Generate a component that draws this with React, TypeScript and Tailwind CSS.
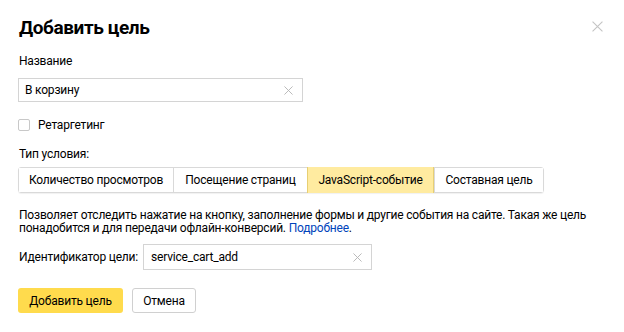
import { useState } from "react";

function Cross({ size = 9, className = "" }: { size?: number; className?: string }) {
  return (
    <svg width={size} height={size} viewBox="0 0 10 10" className={className}>
      <path d="M0.5 0.5 L9.5 9.5 M9.5 0.5 L0.5 9.5" stroke="currentColor" strokeWidth="1" fill="none" />
    </svg>
  );
}

const tabs = [
  { label: "Количество просмотров", w: "w-[154px]" },
  { label: "Посещение страниц", w: "w-[134px]" },
  { label: "JavaScript-событие", w: "w-[127px]" },
  { label: "Составная цель", w: "w-[109px]" },
];

export default function App() {
  const [active, setActive] = useState(2);
  const [retarget, setRetarget] = useState(false);

  return (
    <div className="relative w-[624px] h-[332px] bg-white pl-[19px] pt-[16px] text-[12px] leading-[16px] tracking-[-0.2px] text-black font-['Roboto',Arial,sans-serif]">
      <button className="absolute right-[21px] top-[21px] text-[#c4c4c4]">
        <Cross size={11} />
      </button>

      <h1 className="text-[19px] leading-[24px] font-bold tracking-[-0.4px]">Добавить цель</h1>

      <div className="mt-[13px]">Название</div>
      <div className="mt-[9px] -ml-px flex items-center w-[285px] h-[24px] border border-[#d4d4d4] bg-white pl-[6px] pr-[9px]">
        <span className="flex-1">В корзину</span>
        <Cross size={9} className="text-[#b3b3b3]" />
      </div>

      <label className="mt-[15px] -ml-px flex items-center h-[16px] gap-[8px] cursor-pointer" onClick={() => setRetarget(!retarget)}>
        <span className="w-[12px] h-[12px] rounded-[2px] border border-[#c8c8c8] bg-white" />
        <span>Ретаргетинг</span>
      </label>

      <div className="mt-[13px]">Тип условия:</div>
      <div className="mt-[5px] -ml-px flex h-[26px] w-max rounded-[3px] border border-[#d9d9d9] shadow-[0_1px_1px_rgba(0,0,0,0.06)]">
        {tabs.map((t, i) => (
          <button
            key={t.label}
            onClick={() => setActive(i)}
            className={
              i === active
                ? `${t.w} flex items-center justify-center bg-[#ffeba0] border-x border-[#e7cf73] -my-px h-[26px]`
                : `${t.w} h-full flex items-center justify-center bg-white border-l border-[#d9d9d9] first:border-l-0`
            }
          >
            {t.label}
          </button>
        ))}
      </div>

      <p className="mt-[16px] leading-[13px] w-[575px]">
        Позволяет отследить нажатие на кнопку, заполнение формы и другие события на сайте. Такая же цель понадобится и для передачи офлайн-конверсий.{" "}
        <a className="text-[#0044bb]">Подробнее</a>.
      </p>

      <div className="mt-[9px] flex items-center gap-[5px]">
        <span>Идентификатор цели:</span>
        <div className="flex items-center w-[229px] h-[26px] border border-[#d4d4d4] pl-[7px] pr-[9px]">
          <span className="flex-1">service_cart_add</span>
          <Cross size={9} className="text-[#b3b3b3]" />
        </div>
      </div>

      <div className="mt-[18px] -ml-px flex gap-[9px]">
        <button className="w-[105px] h-[25px] rounded-[3px] bg-[#ffdb4d]">Добавить цель</button>
        <button className="w-[64px] h-[25px] rounded-[3px] border border-[#d0d0d0] bg-white">Отмена</button>
      </div>
    </div>
  );
}
